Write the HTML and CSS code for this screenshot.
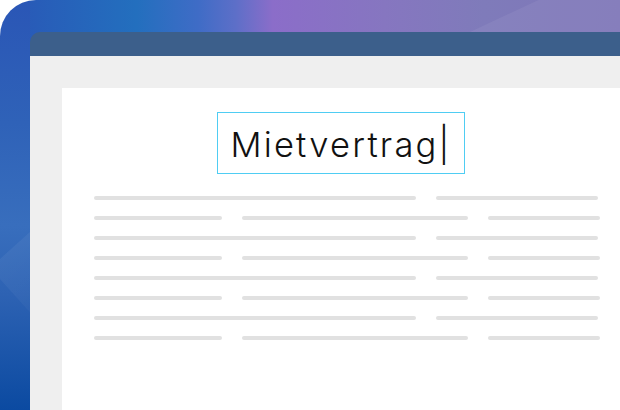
FILE: index.html
```html
<!DOCTYPE html>
<html lang="de">
<head>
<meta charset="utf-8">
<link rel="stylesheet" href="styles.css">
</head>
<body>
<div class="stage">
  <div class="streak streak-top"></div>
  <div class="streak streak-left"></div>
  <div class="window">
    <div class="titlebar"></div>
    <div class="content">
      <div class="paper">
        <div class="field"><span class="field-text">Mietvertrag|</span></div>
        <div class="lines">
          <div class="row"><span class="bar w322"></span><span class="bar w162"></span></div>
          <div class="row"><span class="bar w128"></span><span class="bar w226"></span><span class="bar w112"></span></div>
          <div class="row"><span class="bar w322"></span><span class="bar w162"></span></div>
          <div class="row"><span class="bar w128"></span><span class="bar w226"></span><span class="bar w112"></span></div>
          <div class="row"><span class="bar w322"></span><span class="bar w162"></span></div>
          <div class="row"><span class="bar w128"></span><span class="bar w226"></span><span class="bar w112"></span></div>
          <div class="row"><span class="bar w322"></span><span class="bar w162"></span></div>
          <div class="row"><span class="bar w128"></span><span class="bar w226"></span><span class="bar w112"></span></div>
        </div>
      </div>
    </div>
  </div>
</div>
</body>
</html>
```
FILE: styles.css
```css
html, body {
  margin: 0;
  padding: 0;
  background: #ffffff;
}
.stage {
  position: relative;
  width: 620px;
  height: 410px;
  overflow: hidden;
  box-sizing: border-box;
  padding: 32px 0 0 30px;
  border-top-left-radius: 36px;
  background:
    linear-gradient(180deg, #2a56b6 0%, #2f62b8 30%, #386ebd 55%, #2d62b3 72%, #0b4aa1 100%) left top / 30px 100% no-repeat,
    linear-gradient(90deg, #2a56b6 0%, #236fbe 22%, #3f6cc6 32%, #5d6fc8 38%, #8b6dc9 44%, #8676c0 62%, #7f7bba 78%, #7f76b8 100%);
  display: flex;
}
.streak {
  position: absolute;
  pointer-events: none;
}
.streak-top {
  left: 470px;
  top: 32px;
  width: 300px;
  height: 120px;
  background: rgba(255, 255, 255, 0.06);
  transform: rotate(-25deg);
  transform-origin: left top;
}
.streak-left {
  left: -10px;
  top: 268px;
  width: 160px;
  height: 200px;
  background: linear-gradient(180deg, rgba(255,255,255,0.05), rgba(255,255,255,0) 60%);
  transform: rotate(-42deg);
  transform-origin: left top;
}
.window {
  position: relative;
  flex: 1;
  display: flex;
  flex-direction: column;
  border-top-left-radius: 10px;
  overflow: hidden;
}
.titlebar {
  height: 24px;
  background: #3c5f8b;
  flex: none;
}
.content {
  flex: 1;
  background: #efefef;
  padding: 32px 0 0 32px;
  display: flex;
}
.paper {
  flex: 1;
  background: #ffffff;
  display: flex;
  flex-direction: column;
  padding: 24px 0 0 32px;
}
.field {
  align-self: flex-start;
  margin-left: 123px;
  width: 246px;
  height: 60px;
  border: 1px solid #4fcdf3;
  display: flex;
  align-items: center;
  justify-content: center;
}
.field-text {
  font-family: "Inter", "Liberation Sans", sans-serif;
  font-weight: 300;
  font-size: 34.5px;
  color: #111111;
  letter-spacing: 2.2px;
  margin-top: 2px;
}
.lines {
  margin-top: 22px;
  display: flex;
  flex-direction: column;
  gap: 16px;
}
.row {
  display: flex;
  gap: 20px;
  height: 4px;
}
.bar {
  display: block;
  height: 4px;
  border-radius: 2px;
  background: #e1e1e1;
}
.w322 { width: 322px; }
.w162 { width: 162px; }
.w128 { width: 128px; }
.w226 { width: 226px; }
.w112 { width: 112px; }
```
